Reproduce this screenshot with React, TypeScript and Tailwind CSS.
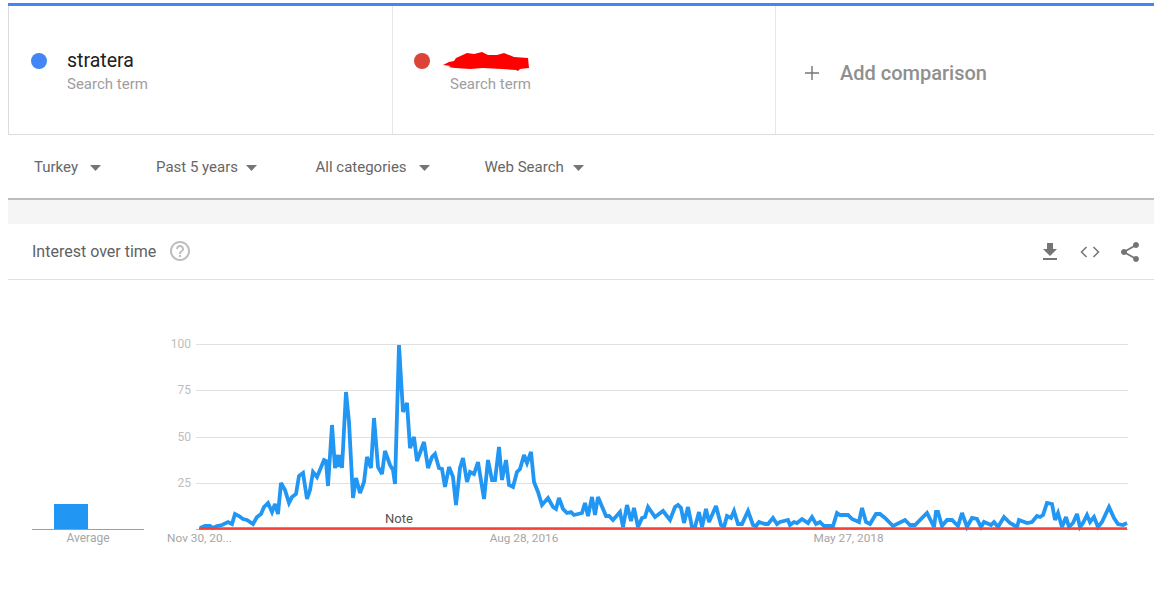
const series =
  "200,528 205,526 210,526 213,528 217,526 222,525 228,522 232,524 235,514 239,516 243,519 247,520 253,524 257,517 261,514 264,507 268,503 272,512 275,504 278,514 281,483 285,490 289,503 292,497 296,494 299,476 303,473 307,499 310,490 313,472 317,477 324,460 326,461 328,486 332,425 335,468 338,455 339,467 341,455 342,468 346,392 349,422 353,498 356,478 360,493 364,482 367,457 371,468 374,418 378,467 382,474 385,451 390,465 393,470 395,484 399,345 403,412 407,403 410,448 414,437 417,461 424,442 428,468 432,457 435,454 439,468 442,469 445,487 449,467 453,477 456,505 460,468 463,458 467,482 470,472 474,474 478,462 484,499 488,460 492,480 495,480 499,447 502,480 506,460 509,485 513,487 517,472 520,469 524,455 527,463 531,452 534,482 538,492 542,505 548,498 553,507 556,509 559,498 563,509 567,513 571,512 574,515 582,513 585,503 588,516 592,497 595,515 598,497 606,516 609,516 613,520 620,512 623,527 627,505 631,521 634,508 638,527 642,518 645,517 648,507 655,517 663,511 670,520 675,507 678,505 681,508 684,523 688,507 692,527 695,527 699,512 702,527 706,509 709,522 716,506 721,525 724,527 727,516 731,518 734,511 738,524 742,524 748,511 753,525 756,526 759,522 765,524 768,524 773,518 777,524 780,522 788,520 790,525 794,522 797,523 802,519 808,523 812,517 816,524 820,522 824,526 833,526 837,513 840,515 848,515 852,519 859,522 862,508 866,522 870,524 876,514 880,514 885,518 893,526 905,520 910,525 915,525 927,513 934,527 936,512 938,512 942,526 947,520 952,520 958,526 962,513 967,527 972,518 977,519 981,527 984,522 991,525 994,522 998,527 1004,517 1010,523 1017,527 1019,520 1027,523 1032,522 1037,516 1040,517 1043,515 1047,503 1052,504 1055,520 1058,513 1062,527 1066,517 1069,527 1073,523 1077,514 1080,527 1083,523 1087,515 1090,522 1094,517 1098,527 1102,522 1109,507 1114,518 1118,524 1123,525 1127,523";

const gridLines = [
  { label: "100", y: 344 },
  { label: "75", y: 390 },
  { label: "50", y: 437 },
  { label: "25", y: 483 },
];

const dateLabels = [
  { label: "Nov 30, 20...", x: 199.5 },
  { label: "Aug 28, 2016", x: 524 },
  { label: "May 27, 2018", x: 848.5 },
];

const filters = [
  { label: "Turkey", item: "w-[122px]", gap: "ml-[12px]" },
  { label: "Past 5 years", item: "w-[159.5px]", gap: "ml-[8px]" },
  { label: "All categories", item: "w-[169px]", gap: "ml-[12px]" },
  { label: "Web Search", item: "w-[110px]", gap: "ml-[9px]" },
];

const Caret = ({ className }: { className: string }) => (
  <svg width="11" height="6" viewBox="0 0 11 6" className={className}>
    <path d="M0 0h11L5.5 6z" fill="#757575" />
  </svg>
);

const TermCard = ({ box, dot, name }: { box: string; dot: string; name?: string }) => (
  <div className={`${box} h-full border-r border-[#e6e6e6] pt-[42px] flex`}>
    <div className={`w-4 h-4 rounded-full mt-[5px] ${dot}`} />
    <div className="ml-5">
      <div className="flex h-[26px] text-[19.5px] leading-[26px] text-[#212121]">
        {name ?? (
          <svg width="88" height="21" viewBox="0 0 88 21" className="block -ml-[8px] mt-[4px]">
            <path
              d="M1 13l6-3 5-1 2-3 11-5 7 1 8-2 6 3h9l7-2 10 4 14 1 1 10-9 1-2 2-2-1-14-1-19-1-13 1-15-1-7-1 3-1z"
              fill="#ff0000"
            />
          </svg>
        )}
      </div>
      <div className="text-[15px] leading-[18px] mt-[1px] text-[#9e9e9e]">Search term</div>
    </div>
  </div>
);

export default function App() {
  return (
    <div className="w-[1154px] h-[613px] bg-white pl-2 pt-[3px] overflow-hidden font-['Roboto',sans-serif]">
      <div className="h-[3px] bg-[#4285f4]" />

      <div className="flex h-[128px] border-l border-b border-[#dcdcdc] box-content">
        <TermCard box="w-[384px] pl-[22px]" dot="bg-[#4285f4]" name="stratera" />
        <TermCard box="w-[383px] pl-[21px]" dot="bg-[#db4437]" />
        <div className="flex items-center pl-[28px] pt-[5px]">
          <svg width="16" height="16" viewBox="0 0 16 16">
            <path d="M8 1v14M1 8h14" stroke="#757575" strokeWidth="1.4" />
          </svg>
          <span className="ml-[20px] text-[20px] font-medium text-[#8f8f8f]">Add comparison</span>
        </div>
      </div>

      <div className="flex items-center h-[65px] pl-[26px] pt-[2px] border-b-2 border-[#bdbdbd]">
        {filters.map((f) => (
          <div key={f.label} className={`flex items-center ${f.item}`}>
            <span className="text-[15px] text-[#666666]">{f.label}</span>
            <Caret className={f.gap} />
          </div>
        ))}
      </div>

      <div className="h-[24px] bg-[#f5f5f5]" />

      <div className="flex items-center h-[56px] pl-6 pr-[12px] border-b border-[#e0e0e0]">
        <span className="text-[16px] text-[#616161]">Interest over time</span>
        <svg width="24" height="24" viewBox="0 0 24 24" className="ml-[12px] -mt-[1px]">
          <path
            d="M11 18h2v-2h-2v2zm1-16C6.48 2 2 6.48 2 12s4.48 10 10 10 10-4.48 10-10S17.52 2 12 2zm0 18c-4.41 0-8-3.59-8-8s3.59-8 8-8 8 3.59 8 8-3.59 8-8 8zm0-14c-2.21 0-4 1.79-4 4h2c0-1.1.9-2 2-2s2 .9 2 2c0 2-3 1.75-3 5h2c0-2.25 3-2.5 3-5 0-2.21-1.79-4-4-4z"
            fill="#bdbdbd"
          />
        </svg>
        <div className="flex-1" />
        <svg width="24" height="24" viewBox="0 0 24 24" fill="#757575">
          <path d="M19 9h-4V3H9v6H5l7 7 7-7zM5 18v2h14v-2H5z" />
        </svg>
        <svg width="24" height="24" viewBox="0 0 24 24" className="ml-[16px]">
          <path d="M8.5 7L3.5 12l5 5M15.5 7l5 5-5 5" fill="none" stroke="#757575" strokeWidth="1.5" />
        </svg>
        <svg width="24" height="24" viewBox="0 0 24 24" fill="#757575" className="ml-[16px]">
          <path d="M18 16.08c-.76 0-1.44.3-1.96.77L8.91 12.7c.05-.23.09-.46.09-.7s-.04-.47-.09-.7l7.05-4.11c.54.5 1.25.81 2.04.81 1.66 0 3-1.34 3-3s-1.34-3-3-3-3 1.34-3 3c0 .24.04.47.09.7L8.04 9.81C7.5 9.31 6.79 9 6 9c-1.66 0-3 1.34-3 3s1.34 3 3 3c.79 0 1.5-.31 2.04-.81l7.12 4.16c-.05.21-.08.43-.08.65 0 1.61 1.31 2.92 2.92 2.92 1.61 0 2.92-1.31 2.92-2.92s-1.31-2.92-2.92-2.92z" />
        </svg>
      </div>

      <div className="flex pl-6 pt-[50px]">
        <div className="w-[112px]">
          <div className="h-[200px] flex items-end border-b border-[#9e9e9e] pl-[22px]">
            <div className="w-[34px] h-[25px] bg-[#2196f3]" />
          </div>
          <div className="text-center text-[12px] leading-[13px] mt-[2px] text-[#a6a6a6]">Average</div>
        </div>

        <svg width="1010" height="220" viewBox="144 330 1010 220" className="block">
          {gridLines.map((g) => (
            <g key={g.label}>
              <line x1="196" x2="1128" y1={g.y + 0.5} y2={g.y + 0.5} stroke="#e0e0e0" />
              <text x="191" y={g.y + 4} textAnchor="end" fontSize="12" fill="#bdbdbd">
                {g.label}
              </text>
            </g>
          ))}
          <line x1="196" x2="1128" y1="529.5" y2="529.5" stroke="#b5b5b5" />
          <polyline
            points={series}
            fill="none"
            stroke="#2196f3"
            strokeWidth="3.8"
            strokeLinejoin="miter"
            strokeMiterlimit="3"
          />
          <line x1="199" x2="1127" y1="528.5" y2="528.5" stroke="#f44336" strokeWidth="2.6" />
          <text x="399" y="523" textAnchor="middle" fontSize="13" fill="#555555">
            Note
          </text>
          {dateLabels.map((d) => (
            <text key={d.label} x={d.x} y="542" textAnchor="middle" fontSize="11.8" fill="#a6a6a6">
              {d.label}
            </text>
          ))}
        </svg>
      </div>
    </div>
  );
}
